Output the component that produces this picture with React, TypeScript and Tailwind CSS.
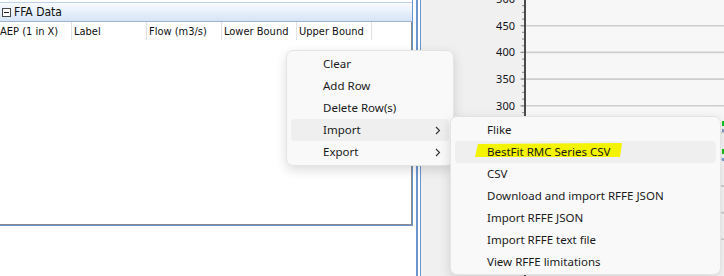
import React from "react";

const menuFont = { fontFamily: '"Noto Sans", "Open Sans", sans-serif' };
const gridFont = { fontFamily: '"DejaVu Sans Condensed", "DejaVu Sans", sans-serif' };

function Chevron() {
  return (
    <svg width="6" height="9" viewBox="0 0 6 9" className="shrink-0">
      <path d="M1 1 L4.5 4.5 L1 8" fill="none" stroke="#303030" strokeWidth="1.1" />
    </svg>
  );
}

function Chart() {
  const labels = [500, 450, 400, 350, 300, 250, 200, 150, 100, 50];
  const step = 26.7;
  const y0 = -1;
  const minor: number[] = [];
  for (let i = 0; i < 44; i++) minor.push(y0 + (i * step) / 4);
  return (
    <svg width="303" height="276" viewBox="0 0 303 276" className="block">
      <rect x="0" y="0" width="104" height="276" fill="#f0f0f0" />
      <rect x="104" y="0" width="199" height="276" fill="#f7f7f7" />
      {labels.map((v, i) => {
        const y = y0 + i * step;
        return (
          <g key={v}>
            <line x1="105" x2="303" y1={y} y2={y} stroke="#cecece" strokeWidth="1.6" />
            {v >= 300 ? (
              <text
                x="94"
                y={y + 4}
                textAnchor="end"
                fontSize="11"
                fill="#101020"
                style={{ fontFamily: '"Noto Sans", sans-serif' }}
              >
                {v}
              </text>
            ) : null}
            <line x1="99.5" x2="103" y1={y} y2={y} stroke="#8a8a8a" strokeWidth="1.2" />
          </g>
        );
      })}
      {minor.map((y, i) => (
        <line key={i} x1="101" x2="103" y1={y} y2={y} stroke="#9a9a9a" strokeWidth="1.2" />
      ))}
      <rect x="103" y="0" width="2" height="276" fill="#4a4a4a" />
      <rect x="301" y="121" width="3" height="5" fill="#18c018" />
      <rect x="301" y="129" width="3" height="3" fill="#7a9fd0" />
      <rect x="301" y="149" width="3" height="5" fill="#18c018" />
      <rect x="301" y="158" width="3" height="3" fill="#7a9fd0" />
    </svg>
  );
}

export default function App() {
  const cols = ["AEP (1 in X)", "Label", "Flow (m3/s)", "Lower Bound", "Upper Bound"];
  const mainItems = [
    { label: "Clear" },
    { label: "Add Row" },
    { label: "Delete Row(s)" },
    { label: "Import", sub: true, active: true },
    { label: "Export", sub: true },
  ];
  const subItems = [
    "Flike",
    "BestFit RMC Series CSV",
    "CSV",
    "Download and import RFFE JSON",
    "Import RFFE JSON",
    "Import RFFE text file",
    "View RFFE limitations",
  ];
  return (
    <div className="relative w-[724px] h-[276px] overflow-hidden flex bg-white">
      {/* left panel column */}
      <div className="w-[416px] h-full flex flex-col bg-white shrink-0">
        <div className="w-[413px] h-[226px] flex flex-col border-r border-b border-[#6b95cf] pt-[2px]">
          <div
            className="h-[20px] flex items-center gap-[3px] pl-[2px] border-t border-b border-t-[#bcd2ec] border-b-[#9fb3cc] bg-gradient-to-b from-[#fafcff] to-[#d5e4f6]"
            style={gridFont}
          >
            <div className="w-[9px] h-[9px] border border-[#4a4a4a] flex items-center justify-center bg-white">
              <div className="w-[5px] h-[1px] bg-[#202020]" />
            </div>
            <span className="text-[12px] text-[#101010] leading-none">FFA Data</span>
          </div>
          <div className="flex-1 flex flex-col border-r border-b border-[#8a8a8a] bg-white">
            <div className="h-[18px] flex text-[11px] text-[#101010] leading-none" style={gridFont}>
              {cols.map((c, i) => (
                <div
                  key={c}
                  className={
                    i === 0
                      ? "w-[72px] h-full flex items-center border-r border-[#e2e2e2]"
                      : "w-[75px] h-full flex items-center pl-[2px] border-r border-[#e2e2e2]"
                  }
                >
                  {c}
                </div>
              ))}
            </div>
          </div>
        </div>
      </div>
      {/* splitter */}
      <div className="w-[2px] h-full bg-[#6b95cf] shrink-0" />
      <div className="w-[2px] h-full bg-white shrink-0" />
      <div className="w-[1px] h-full bg-[#6b95cf] shrink-0" />
      {/* chart */}
      <div className="flex-1 h-full">
        <Chart />
      </div>

      {/* context menu */}
      <div
        className="absolute left-[286px] top-[50px] w-[168px] bg-[#f9f9f9] border border-[#e4e4e4] rounded-[7px] px-[4px] py-[2px] shadow-[0_4px_12px_rgba(0,0,0,0.14)]"
        style={menuFont}
      >
        {mainItems.map((it) => (
          <div
            key={it.label}
            className={
              it.active
                ? "h-[22px] flex items-center justify-between pl-[32px] pr-[8px] rounded-[4px] bg-[#efefef] text-[11.5px] text-[#1a1a1a]"
                : "h-[22px] flex items-center justify-between pl-[32px] pr-[8px] rounded-[4px] text-[11.5px] text-[#1a1a1a]"
            }
          >
            <span>{it.label}</span>
            {it.sub ? <Chevron /> : null}
          </div>
        ))}
      </div>

      {/* submenu */}
      <div
        className="absolute left-[450px] top-[116px] w-[271px] bg-[#f9f9f9] border border-[#e4e4e4] rounded-[7px] px-[4px] pt-[2px] pb-[1px] shadow-[0_4px_12px_rgba(0,0,0,0.14)]"
        style={menuFont}
      >
        {subItems.map((s, i) => (
          <div
            key={s}
            className={
              i === 1
                ? "relative h-[22px] flex items-center pl-[32px] rounded-[4px] bg-[#efefef] text-[11.5px] text-[#1a1a1a]"
                : "relative h-[22px] flex items-center pl-[32px] rounded-[4px] text-[11.5px] text-[#1a1a1a]"
            }
          >
            {i === 1 ? (
              <svg className="absolute left-0 top-0" width="200" height="22" viewBox="0 0 200 22">
                <polygon points="23,3 167,2 165,16 20,16" fill="#f4f400" />
              </svg>
            ) : null}
            <span className="relative">{s}</span>
          </div>
        ))}
      </div>
    </div>
  );
}
